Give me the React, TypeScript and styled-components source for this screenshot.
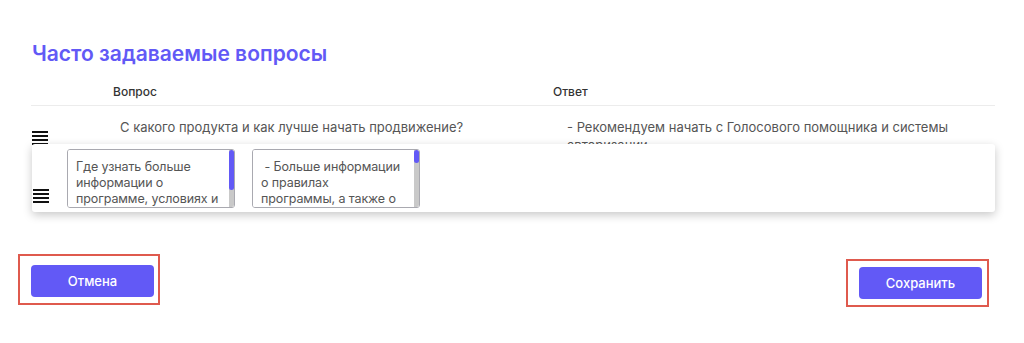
import { useLayoutEffect, useRef, useState } from "react";
import styled, { createGlobalStyle } from "styled-components";

const GlobalStyle = createGlobalStyle`
  * {
    box-sizing: border-box;
  }

  body {
    margin: 0;
    background: #fff;
    font-family: Inter, "Noto Sans", sans-serif;
    color: #333;
  }
`;

const ACCENT = "#6259f6";

const faqRows = [
  {
    id: 1,
    question: "С какого продукта и как лучше начать продвижение?",
    answer: "- Рекомендуем начать с Голосового помощника и системы авторизации",
  },
];

const draggedRow = {
  question:
    "Где узнать больше информации о программе, условиях и правилах участия?",
  answer:
    " - Больше информации\nо правилах\nпрограммы, а также о условиях участия и вознаграждениях вы можете найти в разделе «Документы» вашего личного кабинета или обратиться к персональному менеджеру, который ответит на все интересующие вас вопросы.",
};

function DragHandle() {
  return (
    <Handle viewBox="0 0 16 14" aria-hidden="true">
      <rect x="0" y="0" width="16" height="2" />
      <rect x="0" y="4" width="16" height="2" />
      <rect x="0" y="8" width="16" height="2" />
      <rect x="0" y="12" width="16" height="2" />
    </Handle>
  );
}

// textarea with a thin accent scrollbar drawn over it
function ScrollField({ value }: { value: string }) {
  const ref = useRef<HTMLTextAreaElement>(null);
  const [ratio, setRatio] = useState(1);

  useLayoutEffect(() => {
    const el = ref.current;
    if (!el) return;
    setRatio(Math.min(1, el.clientHeight / el.scrollHeight));
  }, [value]);

  return (
    <FieldWrap>
      <EditField ref={ref} defaultValue={value} />
      <ScrollTrack>
        <ScrollThumb style={{ height: `${ratio * 100}%` }} />
      </ScrollTrack>
    </FieldWrap>
  );
}

export default function App() {
  return (
    <>
      <GlobalStyle />
      <Page>
        <Title>Часто задаваемые вопросы</Title>

        <Table>
          <HeadRow>
            <HeadCell />
            <HeadCell>Вопрос</HeadCell>
            <HeadCell>Ответ</HeadCell>
          </HeadRow>

          <Body>
            {faqRows.map((row) => (
              <Row key={row.id}>
                <HandleCell>
                  <DragHandle />
                </HandleCell>
                <Cell $indent={15}>{row.question}</Cell>
                <Cell $indent={22}>{row.answer}</Cell>
              </Row>
            ))}
            <Placeholder />

            <DragCard>
              <CardHandle>
                <DragHandle />
              </CardHandle>
              <ScrollField value={draggedRow.question} />
              <ScrollField value={draggedRow.answer} />
            </DragCard>
          </Body>
        </Table>

        <Footer>
          <Highlight $top={9} $right={4} $bottom={6}>
            <Button>Отмена</Button>
          </Highlight>
          <Highlight $top={6} $right={5} $bottom={6} $offset={5}>
            <Button>Сохранить</Button>
          </Highlight>
        </Footer>
      </Page>
    </>
  );
}

const Page = styled.main`
  padding: 40px 29px 20px 31px;
`;

const Title = styled.h1`
  margin: 0;
  padding-left: 1px;
  font-size: 21px;
  line-height: 28px;
  font-weight: 600;
  color: ${ACCENT};
`;

const Table = styled.div`
  margin-top: 12px;
`;

const HeadRow = styled.div`
  display: grid;
  grid-template-columns: 74px 440px 1fr;
  border-bottom: 1px solid #ececec;
`;

const HeadCell = styled.div`
  padding: 4px 8px 5px;
  font-size: 12px;
  line-height: 16px;
  font-weight: 500;
  color: #333;
`;

const Body = styled.div`
  position: relative;
`;

const Row = styled.div`
  display: grid;
  grid-template-columns: 74px 440px 1fr;
  min-height: 62px;
  padding-top: 12px;
`;

const HandleCell = styled.div`
  display: flex;
  align-items: center;
  margin-top: -10px;
  padding-left: 1px;
`;

const Cell = styled.div<{ $indent: number }>`
  padding: 0 15px 0 ${(p) => p.$indent}px;
  font-size: 13px;
  line-height: 18px;
  color: #555;
`;

const Handle = styled.svg`
  width: 16px;
  height: 14px;
  display: block;
  fill: #111;
`;

const Placeholder = styled.div`
  height: 68px;
`;

const DragCard = styled.div`
  position: absolute;
  top: 38px;
  left: 1px;
  right: 0;
  height: 68px;
  display: flex;
  align-items: flex-start;
  gap: 17px;
  padding: 5px 0 0 1px;
  background: #fff;
  border-radius: 3px;
  box-shadow: 0 3px 10px rgba(0, 0, 0, 0.22);
`;

const CardHandle = styled.div`
  align-self: flex-end;
  margin: 0 1px 9px 0;
`;

const FieldWrap = styled.div`
  position: relative;
  width: 168px;
  height: 59px;
`;

const EditField = styled.textarea`
  display: block;
  width: 100%;
  height: 100%;
  margin: 0;
  padding: 9px 8px 8px 8px;
  border: 1px solid #a9a9b0;
  border-radius: 3px;
  resize: none;
  font-family: Inter, "Noto Sans", sans-serif;
  font-size: 12.5px;
  letter-spacing: -0.1px;
  line-height: 16px;
  color: #555;
  background: #fff;
  overflow-y: scroll;
  scrollbar-width: none;
`;

const ScrollTrack = styled.div`
  position: absolute;
  top: 1px;
  right: 1px;
  bottom: 1px;
  width: 5px;
  background: #c9c9c9;
  border-radius: 0 2px 2px 0;
`;

const ScrollThumb = styled.div`
  width: 100%;
  background: ${ACCENT};
  border-radius: 3px;
`;

const Footer = styled.div`
  display: flex;
  justify-content: space-between;
  align-items: flex-start;
  margin: 18px 6px 0 -13px;
`;

const Highlight = styled.div<{
  $top: number;
  $right: number;
  $bottom: number;
  $offset?: number;
}>`
  margin-top: ${(p) => p.$offset ?? 0}px;
  padding: ${(p) => `${p.$top}px ${p.$right}px ${p.$bottom}px 11px`};
  border: 2px solid #df5a4e;
`;

const Button = styled.button`
  display: block;
  width: 123px;
  height: 32px;
  border: none;
  border-radius: 4px;
  background: ${ACCENT};
  color: #fff;
  font-family: Inter, "Noto Sans", sans-serif;
  font-size: 13px;
  font-weight: 500;
  cursor: pointer;
`;
